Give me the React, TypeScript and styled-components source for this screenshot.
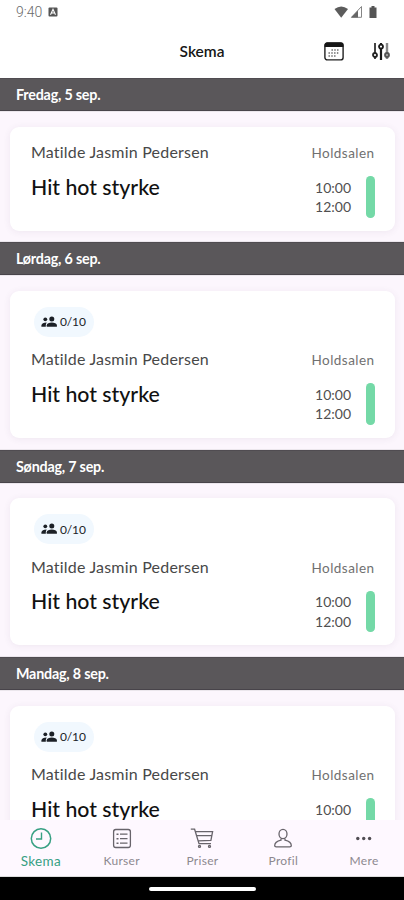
import React from 'react';
import styled, { createGlobalStyle } from 'styled-components';

const Global = createGlobalStyle`
  * { box-sizing: border-box; }
  body { margin: 0; background: #fff; font-family: Lato, "Liberation Sans", sans-serif; }
`;

const Screen = styled.div`
  display: flex;
  flex-direction: column;
  width: 404px;
  height: 900px;
  overflow: hidden;
  background: #fff;
`;

const StatusBar = styled.div`
  display: flex;
  align-items: center;
  height: 24px;
  padding: 0 26px 0 16px;
  color: #6b6b6b;
`;

const Clock = styled.span`
  font-family: Roboto, sans-serif;
  font-size: 14px;
  font-weight: 300;
  line-height: 24px;
  letter-spacing: 0;
  margin-right: 6px;
`;

const StatusIcons = styled.div`
  display: flex;
  align-items: center;
  margin-left: auto;
`;

const TitleBar = styled.header`
  display: grid;
  grid-template-columns: 1fr auto 1fr;
  align-items: center;
  height: 54px;
  padding-right: 14px;
`;

const Title = styled.h1`
  grid-column: 2;
  margin: 0 0 0 14px;
  font-size: 15.5px;
  font-weight: 600;
  line-height: 20px;
  letter-spacing: 0;
  color: #161616;
`;

const Actions = styled.div`
  display: flex;
  justify-content: flex-end;
  align-items: center;
  gap: 28px;
`;

const List = styled.main`
  flex: 1;
  min-height: 0;
  overflow: hidden;
  background: #fcf6fd;
`;

const DayHeader = styled.h2`
  height: 33px;
  margin: 0;
  padding-left: 16px;
  background: #5a575a;
  box-shadow: inset 0 -1px #48444a, inset 0 1px #504c51, 0 0 1px #999;
  color: #fff;
  font-size: 14.3px;
  font-weight: 700;
  line-height: 34px;
  letter-spacing: -0.2px;
`;

const Slot = styled.div`
  padding: 15.5px 9px 11.7px 10px;
`;

const Card = styled.article<{ $tall: boolean }>`
  height: ${(p) => (p.$tall ? 147.3 : 104)}px;
  padding: ${(p) => (p.$tall ? 16 : 15.8)}px 20.500px 0 21px;
  border-radius: 9px;
  background: #fff;
  box-shadow: 0 1px 7px rgba(80, 50, 90, 0.08);
`;

const Badge = styled.div`
  display: flex;
  align-items: center;
  width: 60px;
  height: 30px;
  margin: 0 0 12.6px 3px;
  padding-left: 7px;
  gap: 3px;
  border-radius: 15px;
  background: #f1f8fe;
  color: #202329;
  font-size: 12px;
  letter-spacing: -0.15px;
  line-height: 31px;
`;

const Row = styled.div`
  display: flex;
  justify-content: space-between;
  align-items: baseline;
  height: 20px;
  margin-bottom: 11px;
  line-height: 20px;
`;

const Coach = styled.span`
  color: #484848;
  font-size: 16px;
  letter-spacing: 0.2px;
`;

const Room = styled.span`
  color: #707070;
  font-size: 13.5px;
  letter-spacing: 0.45px;
`;

const Details = styled.div`
  display: flex;
  align-items: flex-start;
`;

const ClassName = styled.h3`
  flex: 1;
  margin: 0.6px 0 0;
  color: #111;
  font-size: 21.3px;
  font-weight: 500;
  line-height: 26px;
`;

const Times = styled.div`
  margin: 4.6px 15px 0 0;
  color: #505050;
  font-size: 14px;
  line-height: 19.5px;
`;

const Marker = styled.div`
  width: 8.5px;
  height: 41.5px;
  margin-top: 3px;
  border-radius: 4.25px;
  background: #74d9a7;
`;

const Nav = styled.nav`
  display: grid;
  grid-template-columns: repeat(5, 1fr);
  height: 57px;
  background: #fef8ff;
  border-bottom: 1px solid #ddd;
`;

const Tab = styled.div<{ $active?: boolean }>`
  display: flex;
  flex-direction: column;
  align-items: center;
  padding: 8px 0 0 1px;
  color: ${(p) => (p.$active ? '#37a083' : '#68646b')};
`;

const TabLabel = styled.span<{ $active?: boolean }>`
  margin-top: 3px;
  color: ${(p) => (p.$active ? '#37a083' : '#8d888f')};
  font-size: ${(p) => (p.$active ? 13.5 : 12)}px;
  line-height: 16px;
  letter-spacing: 0.3px;
`;

const HomeArea = styled.div`
  display: flex;
  justify-content: center;
  height: 23px;
  padding-top: 9.5px;
  background: #000;
`;

const HomeBar = styled.div`
  width: 107px;
  height: 4.5px;
  border-radius: 3px;
  background: #fff;
`;

const AppMark = () => (
  <svg width="10" height="10" viewBox="0 0 10 10">
    <rect x=".5" y=".5" width="9" height="9" rx="1" fill="#555" />
    <path d="M2.5 7.7 5 2.3l2.5 5.4M3.4 6h3.2" fill="none" stroke="#fff" strokeWidth="1.1" />
  </svg>
);

const StatusGlyphs = () => (
  <svg width="44" height="14" viewBox="0 0 44 14">
    <path d="M.5 4Q7.200-1 14 4L7.200 12.800Z" fill="#5c5c5c" />
    <path d="M27.500 1.500V12.300H17.500Z" fill="none" stroke="#858585" />
    <path d="M24 5.500V12.500H17Z" fill="#666" />
    <path d="M35.500 2.500h2V1h3v1.500h2v10.500h-7Z" fill="#555" />
  </svg>
);

const CalendarIcon = () => (
  <svg width="20" height="19" viewBox="0 0 20 19">
    <rect x=".9" y=".9" width="18.200" height="17" rx="2.500" fill="#fff" stroke="#222" strokeWidth="1.400" />
    <path d="M.6 5V3Q.6.4 3 .4h14q2.400 0 2.400 2.600v2Z" fill="#161616" />
    <g stroke="#666" strokeWidth="1.400" strokeDasharray="1.400 1.400">
      <path d="M7.500 8h8.400M4.500 11h11.200M4.500 14h8.400" />
    </g>
  </svg>
);

const SlidersIcon = () => (
  <svg width="18" height="19" viewBox="0 0 18 19" fill="none">
    <path d="M3 1v10M3 15v2" stroke="#444" strokeWidth="2" />
    <path d="M9 1v1.500M9 7v11" stroke="#181818" strokeWidth="2.200" />
    <path d="M15 1v10M15 15v2" stroke="#888" strokeWidth="2.400" />
    <circle cx="3" cy="13" r="2" stroke="#222" strokeWidth="1.800" />
    <circle cx="9" cy="4.600" r="2" stroke="#181818" strokeWidth="1.800" />
    <circle cx="15" cy="13" r="2" fill="#aaa" stroke="#555" strokeWidth="1.800" />
  </svg>
);

const PeopleIcon = () => (
  <svg width="16" height="12" viewBox="0 0 16 12" fill="#1c2026">
    <circle cx="4.300" cy="3.300" r="1.900" />
    <path d="M.4 10.800V9.300Q.8 6.800 5.700 6.500 4.800 7.900 4.800 9.300v1.500Z" />
    <circle cx="10.800" cy="3" r="2.500" />
    <path d="M5.700 10.800V9.300C5.900 5.700 15.700 5.700 15.900 9.300v1.500Z" />
  </svg>
);

const ClockIcon = () => (
  <svg width="22" height="22" viewBox="0 0 22 22" fill="none" stroke="currentColor">
    <circle cx="11" cy="10.500" r="9.700" strokeWidth="1.500" />
    <path d="M11.500 4.500V11H6" strokeWidth="1.400" />
  </svg>
);

const ListIcon = () => (
  <svg width="22" height="22" viewBox="0 0 22 22" fill="none" stroke="currentColor">
    <rect x="2.600" y="1.500" width="16.800" height="18" rx="2.200" strokeWidth="1.300" />
    <path d="M9 6.200h7.500M9 10.700h7.500M9 15.200h7.500" strokeWidth="1.300" />
    <path d="M5.500 6.200h2M5.500 10.700h2M5.500 15.200h2" strokeWidth="1.600" />
  </svg>
);

const CartIcon = () => (
  <svg width="24" height="22" viewBox="0 0 24 22" fill="none" stroke="currentColor" strokeWidth="1.300">
    <path d="M.8 1.200h3.800L9 15.700h12M5.600 3.700h17l-1.700 8.600L8.200 12.800M6.800 7.600h15" />
    <circle cx="9.500" cy="18.400" r="1" />
    <circle cx="19.500" cy="18.400" r="1" />
  </svg>
);

const ProfileIcon = () => (
  <svg width="22" height="22" viewBox="0 0 22 22" fill="none" stroke="currentColor" strokeWidth="1.300">
    <ellipse cx="11" cy="6" rx="4" ry="4.700" />
    <path d="M9 10.700v1.500C4.800 13.200 2.700 15 2.700 17.800q0 1 1.500 1h13.600q1.500 0 1.500-1c0-2.800-2.100-4.600-6.300-5.600v-1.500" />
  </svg>
);

const MoreIcon = () => (
  <svg width="22" height="22" viewBox="0 0 22 22" fill="#514d54">
    <circle cx="4.800" cy="10.500" r="1.700" />
    <circle cx="10.700" cy="10.500" r="1.700" />
    <circle cx="16.600" cy="10.500" r="1.700" />
  </svg>
);

const days = [
  { label: 'Fredag, 5 sep.', badge: '' },
  { label: 'Lørdag, 6 sep.', badge: '0/10' },
  { label: 'Søndag, 7 sep.', badge: '0/10' },
  { label: 'Mandag, 8 sep.', badge: '0/10' },
];

const tabs = [
  { label: 'Skema', Icon: ClockIcon, active: true },
  { label: 'Kurser', Icon: ListIcon },
  { label: 'Priser', Icon: CartIcon },
  { label: 'Profil', Icon: ProfileIcon },
  { label: 'Mere', Icon: MoreIcon },
];

export default function App() {
  return (
    <Screen>
      <Global />
      <StatusBar>
        <Clock>9:40</Clock>
        <AppMark />
        <StatusIcons><StatusGlyphs /></StatusIcons>
      </StatusBar>
      <TitleBar>
        <Title>Skema</Title>
        <Actions>
          <CalendarIcon />
          <SlidersIcon />
        </Actions>
      </TitleBar>
      <List>
        {days.map((day) => (
          <section key={day.label}>
            <DayHeader>{day.label}</DayHeader>
            <Slot>
              <Card $tall={!!day.badge}>
                {day.badge && <Badge><PeopleIcon />{day.badge}</Badge>}
                <Row>
                  <Coach>Matilde Jasmin Pedersen</Coach>
                  <Room>Holdsalen</Room>
                </Row>
                <Details>
                  <ClassName>Hit hot styrke</ClassName>
                  <Times>
                    <div>10:00</div>
                    <div>12:00</div>
                  </Times>
                  <Marker />
                </Details>
              </Card>
            </Slot>
          </section>
        ))}
      </List>
      <Nav>
        {tabs.map(({ label, Icon, active }) => (
          <Tab key={label} $active={active}>
            <Icon />
            <TabLabel $active={active}>{label}</TabLabel>
          </Tab>
        ))}
      </Nav>
      <HomeArea><HomeBar /></HomeArea>
    </Screen>
  );
}
